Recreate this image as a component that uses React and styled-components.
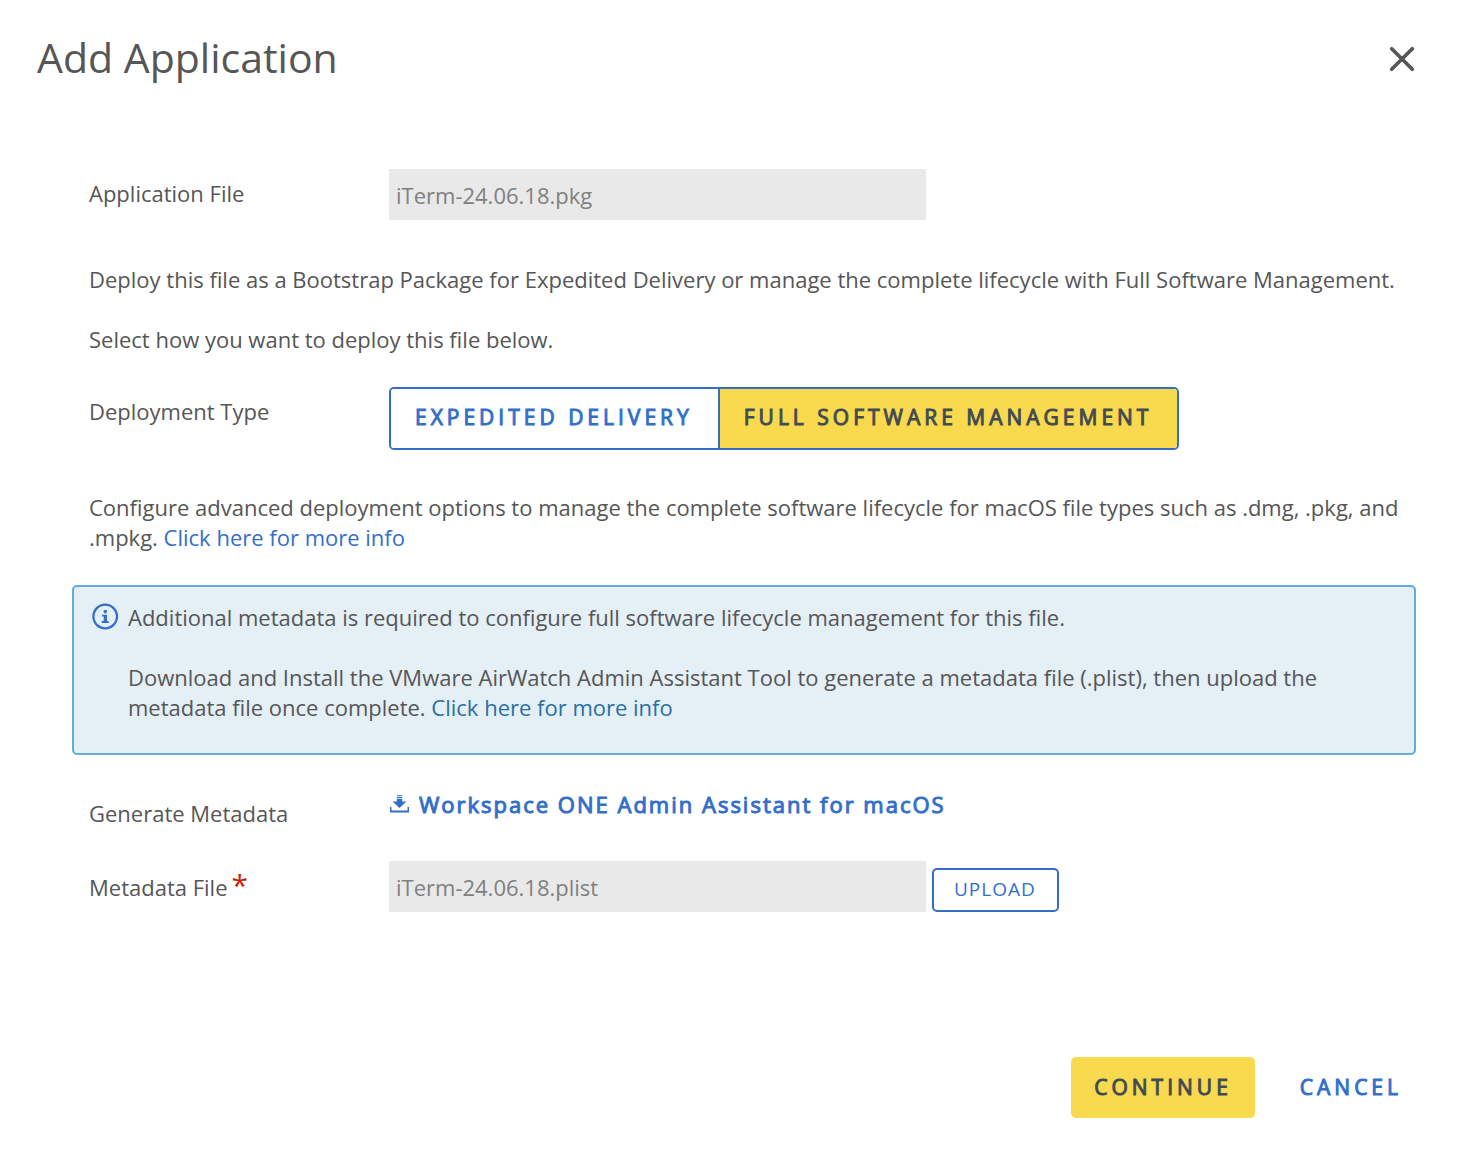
import React from "react";
import styled, { createGlobalStyle, css } from "styled-components";

const Global = createGlobalStyle`
  *, *::before, *::after { box-sizing: border-box; }
  body { margin: 0; background: #fff; color: #565656; font: 22px/30px "Open Sans", "Noto Sans", sans-serif; }
  button, input { font-family: inherit; }
  p { margin: 0; }
`;

const strong = css`
  font-weight: 400;
  -webkit-text-stroke: 1px currentColor;
`;

const Dialog = styled.main`
  min-height: 100vh;
  display: flex;
  flex-direction: column;
`;
const Header = styled.header`
  display: flex;
  justify-content: space-between;
  align-items: center;
  padding: 29px 44px 0 37px;
`;
const Title = styled.h1`
  margin: 0;
  font-size: 41px;
  line-height: 56px;
  font-weight: 400;
`;
const CloseButton = styled.button`
  display: flex;
  padding: 4px 0 0;
  border: 0;
  background: none;
  color: #565656;
  cursor: pointer;
`;
const Form = styled.form`
  flex: 1;
  display: flex;
  flex-direction: column;
  padding: 84px 37px 44px 72px;
`;
const Row = styled.div`
  display: grid;
  grid-template-columns: 300px minmax(0, 1fr);
  align-items: ${(p) => (p.$center ? "center" : "start")};
  margin-top: ${(p) => p.$gap || 0}px;
  padding-left: 17px;
`;
const Label = styled.label`
  padding-top: ${(p) => (p.$flush ? 0 : 9)}px;
`;
const Required = styled.span`
  margin-left: 4px;
  color: #c92100;
  font-size: 30px;
  line-height: 20px;
`;
const Controls = styled.div`
  display: flex;
  align-items: flex-end;
  gap: 6px;
`;
const FileInput = styled.input`
  width: 537px;
  height: 51px;
  padding: 0 7px;
  border: 0;
  border-radius: 0;
  background: #e9e9e9;
  color: #808080;
  font-size: 22px;
`;
const Text = styled.p`
  margin-top: ${(p) => p.$gap || 0}px;
  padding-left: 17px;
`;
const Link = styled.a`
  color: ${(p) => p.$color || "#336fca"};
  text-decoration: none;
`;
const Segments = styled.div`
  display: flex;
  justify-self: start;
  height: 63px;
  border: 2px solid #336fca;
  border-radius: 5px;
  overflow: hidden;
`;
const Segment = styled.button`
  ${strong}
  padding: 0 25px 3px 24px;
  border: 0;
  background: ${(p) => (p.$active ? "#f9d94e" : "#fff")};
  color: ${(p) => (p.$active ? "#424b54" : "#336fca")};
  font-size: 21px;
  letter-spacing: 4px;
  cursor: pointer;
  & + & { border-left: 2px solid #336fca; }
`;
const Notice = styled.section`
  display: flex;
  gap: 9px;
  margin: 33px 9px 0 0;
  padding: 15px 60px 31px 18px;
  border: 2px solid #62add9;
  border-radius: 5px;
  background: #e4eff6;
  svg { flex: none; margin-top: 1px; }
`;
const NoticeBody = styled.div`
  display: grid;
  gap: 30px;
`;
const DownloadLink = styled.a`
  ${strong}
  display: flex;
  align-items: center;
  gap: 9px;
  color: #336fca;
  font-size: 22px;
  letter-spacing: 2px;
  text-decoration: none;
`;
const UploadButton = styled.button`
  height: 44px;
  padding: 0 21px 2px 20px;
  border: 2px solid #336fca;
  border-radius: 5px;
  background: #fff;
  color: #336fca;
  font-size: 19px;
  letter-spacing: 1px;
  cursor: pointer;
`;
const Footer = styled.footer`
  display: flex;
  justify-content: flex-end;
  gap: 22px;
  margin-top: auto;
`;
const ActionButton = styled.button`
  ${strong}
  height: 61px;
  padding: 0 23px 1px;
  border: 0;
  border-radius: 5px;
  background: ${(p) => (p.$primary ? "#f9d94e" : "transparent")};
  color: ${(p) => (p.$primary ? "#424b54" : "#336fca")};
  font-size: 21px;
  letter-spacing: 4px;
  cursor: pointer;
`;

function CloseIcon() {
  return (
    <svg width="32" height="32" viewBox="0 0 32 32" fill="none" stroke="currentColor" strokeWidth="3.7" strokeLinecap="round" aria-hidden="true">
      <path d="M5.700 5.700 26.300 26.300M26.300 5.700 5.700 26.300" />
    </svg>
  );
}
function InfoIcon() {
  return (
    <svg width="27" height="27" viewBox="0 0 27 27" aria-hidden="true">
      <circle cx="13.2" cy="13.5" r="11.8" fill="none" stroke="#336fca" strokeWidth="2.3" />
      <circle cx="13.3" cy="8.6" r="1.8" fill="#336fca" />
      <path d="M10 11.800h5v6.300h1.700v1.800h-7v-1.800h2v-4.500h-1.700z" fill="#336fca" />
    </svg>
  );
}
function DownloadIcon() {
  return (
    <svg width="21" height="20" viewBox="0 0 21 20" fill="#336fca" aria-hidden="true">
      <path d="M7.800 1.200h5.400v1H7.800zM7.800 3h5.400v1.200H7.800zM7.800 5h5.400v2.500h4.300L10.500 14 3.500 7.500h4.300zM1 13h1.500v3.500h16V13H20v5.500H1z" />
    </svg>
  );
}

export default function App() {
  return (
    <>
      <Global />
      <Dialog>
        <Header>
          <Title>Add Application</Title>
          <CloseButton type="button" aria-label="Close"><CloseIcon /></CloseButton>
        </Header>
        <Form onSubmit={(e) => e.preventDefault()}>
          <Row>
            <Label htmlFor="application-file">Application File</Label>
            <FileInput id="application-file" readOnly value="iTerm-24.06.18.pkg" />
          </Row>
          <Text $gap={44}>
            Deploy this file as a Bootstrap Package for Expedited Delivery or manage the complete lifecycle with Full Software Management.
          </Text>
          <Text $gap={30}>Select how you want to deploy this file below.</Text>
          <Row $gap={33}>
            <Label as="span" id="deployment-type">Deployment Type</Label>
            <Segments role="group" aria-labelledby="deployment-type">
              <Segment type="button" aria-pressed="false">EXPEDITED DELIVERY</Segment>
              <Segment type="button" aria-pressed="true" $active>FULL SOFTWARE MANAGEMENT</Segment>
            </Segments>
          </Row>
          <Text $gap={42}>
            Configure advanced deployment options to manage the complete software lifecycle for macOS file types such as .dmg, .pkg, and .mpkg. <Link href="#software-info">Click here for more info</Link>
          </Text>
          <Notice>
            <InfoIcon />
            <NoticeBody>
              <p>Additional metadata is required to configure full software lifecycle management for this file.</p>
              <p>
                Download and Install the VMware AirWatch Admin Assistant Tool to generate a metadata file (.plist), then upload the metadata file once complete. <Link href="#metadata-info" $color="#2b6fa3">Click here for more info</Link>
              </p>
            </NoticeBody>
          </Notice>
          <Row $gap={34}>
            <Label as="span">Generate Metadata</Label>
            <DownloadLink href="#admin-assistant"><DownloadIcon />Workspace ONE Admin Assistant for macOS</DownloadLink>
          </Row>
          <Row $gap={33} $center>
            <Label htmlFor="metadata-file" $flush>Metadata File<Required>*</Required></Label>
            <Controls>
              <FileInput id="metadata-file" readOnly required value="iTerm-24.06.18.plist" />
              <UploadButton type="button">UPLOAD</UploadButton>
            </Controls>
          </Row>
          <Footer>
            <ActionButton type="submit" $primary>CONTINUE</ActionButton>
            <ActionButton type="button">CANCEL</ActionButton>
          </Footer>
        </Form>
      </Dialog>
    </>
  );
}
